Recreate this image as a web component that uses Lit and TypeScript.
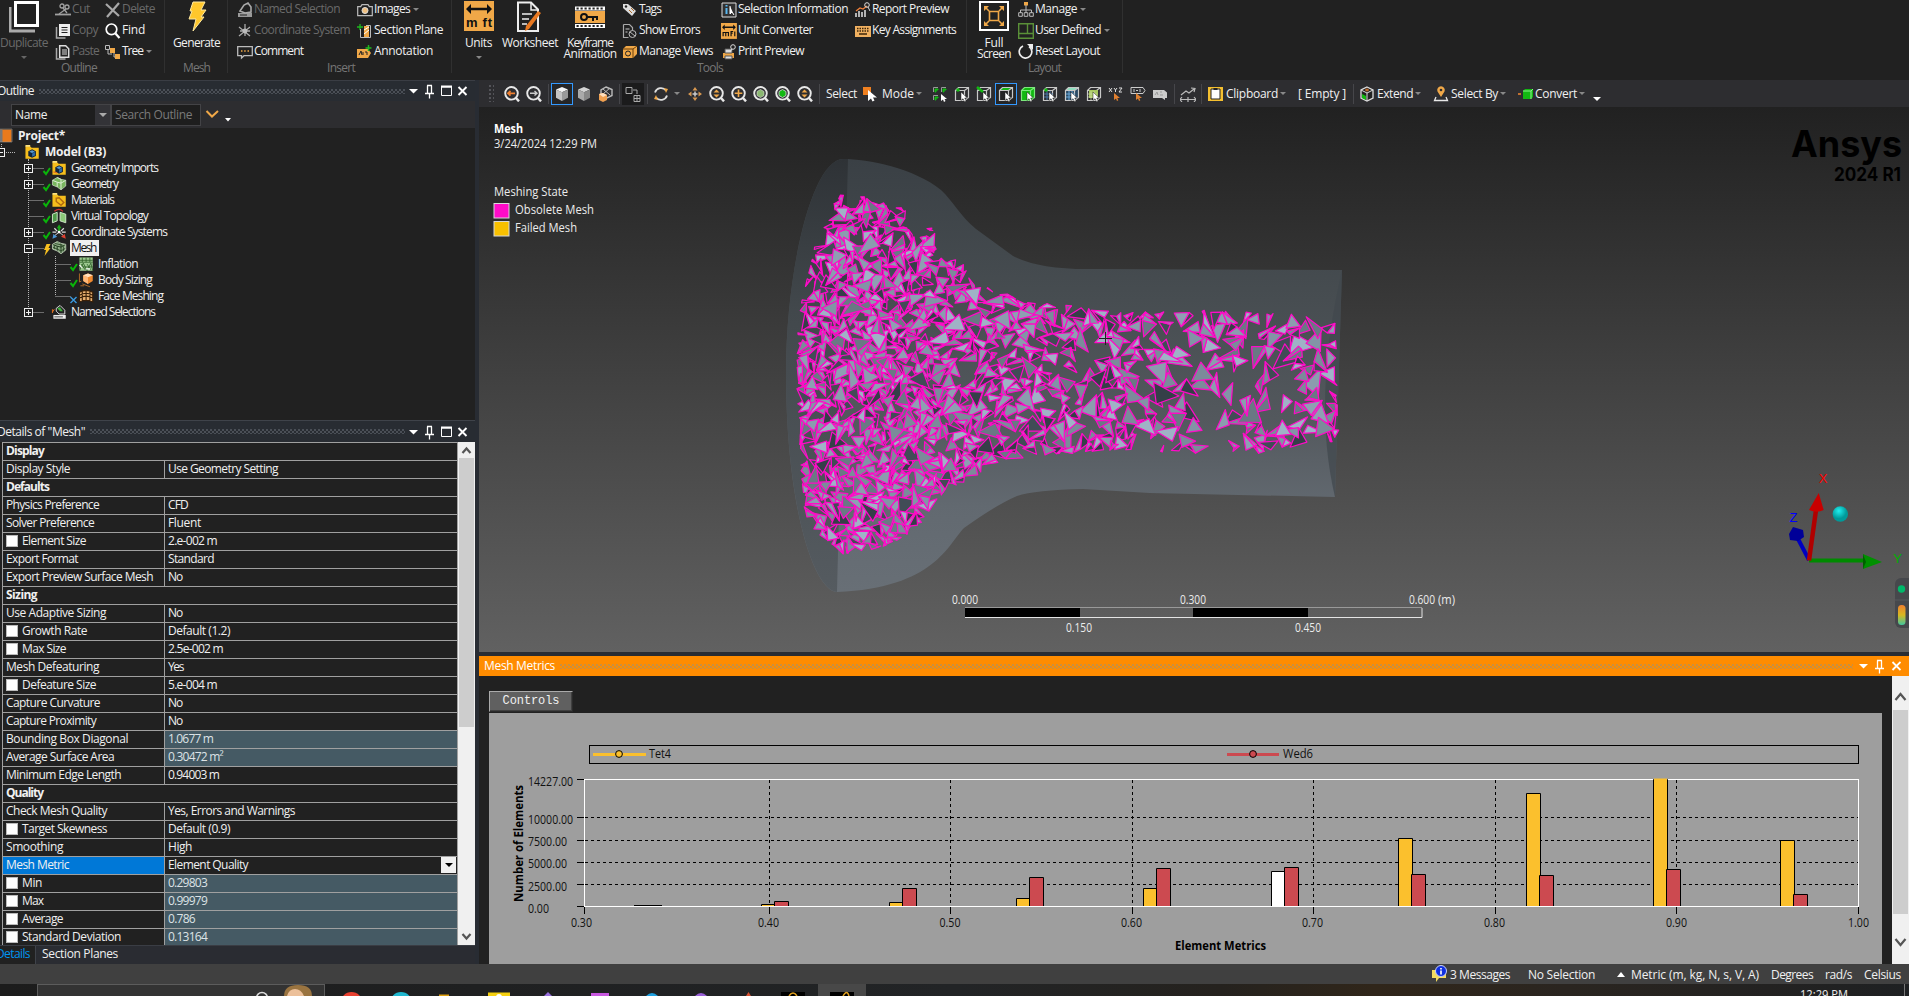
import { LitElement, html, svg, css, nothing } from "lit";
import { customElement } from "lit/decorators.js";

const FAMILY = '"Open Sans", "Noto Sans", sans-serif';
const ctx = document.createElement("canvas").getContext("2d")!;

/** Text span tracked so that it takes up exactly `w` pixels. */
function fit(text: string, w: number, bold = false, cls = "") {
  ctx.font = `${bold ? 700 : 400} 12px ${FAMILY}`;
  const natural = ctx.measureText(text).width;
  const ls = (w - natural) / text.length;
  return html`<span class="t ${bold ? "b" : ""} ${cls}" style="letter-spacing:${ls.toFixed(3)}px">${text}</span>`;
}

/** SVG label with a fixed run length. */
function label(text: string, x: number, y: number, w: number, cls = "vt") {
  return svg`<text class=${cls} x=${x} y=${y} textLength=${w} lengthAdjust="spacingAndGlyphs">${text}</text>`;
}

function rng(seed: number) {
  let s = seed;
  return () => {
    s = (s * 1664525 + 1013904223) % 4294967296;
    return s / 4294967296;
  };
}

const W = "#e8e8e8";
const O = "#f0a848";
const G = "#12b812";

const ic = (body: unknown, w = 16, h = 16, vb = `0 0 ${w} ${h}`) =>
  html`<svg class="ic" width=${w} height=${h} viewBox=${vb}>${body}</svg>`;

const cubeWire = (col = "#c8c8c8") => svg`<path d="M1.5 4.5h9v10h-9zM1.5 4.5l3-3h10v10l-4 3M10.500 4.500l4-3" fill="none" stroke=${col} stroke-width="1.200"/>`;
const cursor = svg`<path d="M7 6v8.500l2-1.800 1.500 3 1.600-.8-1.400-2.900h2.600z" fill="#fff" stroke="#222" stroke-width=".5"/>`;
const lens = (inner: unknown) => svg`<circle cx="7.500" cy="7.300" r="6.300" fill="none" stroke="#e8e8e8" stroke-width="1.900"/><path d="M12 12l3 3.400" stroke="#e8e8e8" stroke-width="2.400"/>${inner}`;
const solidCube = (a: string, b: string, c: string) => svg`<path d="M8 1l6 2.500-6 2.800-6-2.800z" fill=${a}/><path d="M2 3.500l6 2.800V15l-6-3.200z" fill=${b}/><path d="M14 3.500L8 6.300V15l6-3.200z" fill=${c}/>`;
const unitsArrow = svg`<path d="M0 0h30v30H0z" fill="#f0a848"/><path d="M2 8l5-5v3.800h16V3l5 5-5 5V9.200H7V13z" fill="#111"/>`;

const I: Record<string, unknown> = {
  cut: svg`<g stroke="#a0a0a0" fill="none" stroke-width="1.300"><circle cx="7" cy="4" r="2"/><circle cx="12" cy="5" r="2"/><path d="M8 6l4 5M11 7L4 12"/><path d="M0 12.500h16" stroke-width="1.800"/></g>`,
  copy: svg`<path d="M1.500 4v11h9" fill="none" stroke="#aaa" stroke-width="1.500"/><path d="M4 1h11v12H4z" fill="#eee"/><path d="M6.500 4.500h6M6.500 7h6M6.500 9.500h6" stroke="#222"/>`,
  paste: svg`<path d="M1.500 4v11h9" fill="none" stroke="#aaa" stroke-width="1.500"/><path d="M4.700 1.700h6l3 3v8.600h-9z" fill="none" stroke="#ddd" stroke-width="1.500"/><path d="M7 6h5M7 8h5M7 10h5" stroke="#ddd"/>`,
  del: svg`<path d="M1 2l13 12M14 1L2 15" stroke="#a8a8a8" stroke-width="2.200"/>`,
  find: svg`<circle cx="6.500" cy="6.300" r="5.300" fill="none" stroke="#fff" stroke-width="1.700"/><path d="M10.500 10.500l4 4.500" stroke="#fff" stroke-width="2.200"/>`,
  tree: svg`<path d="M.5 1.500h4v4h-4z" fill="none" stroke="#bbb"/><path d="M3 6v4h4M9 8v5h3" stroke="#bbb" fill="none"/><path d="M5 4h5v5H5zM10 10h5v5h-5z" fill="#f0a848"/>`,
  named: svg`<path d="M1 11h14v4H1z" fill="#999"/><path d="M3 9l4-6 4-2 3 4v5l-6 1z" fill="none" stroke="#aaa" stroke-width="1.600"/><path d="M3 13h7" stroke="#222"/>`,
  coord: svg`<path d="M8 1v12M2 4l11 9M13 4L2 13M3 8h10" stroke="#aaa" stroke-width="1.300"/><circle cx="8" cy="8" r="2.400" fill="#bbb"/>`,
  comment: svg`<path d="M.7 2.700h14.600v9H7L4.500 14v-2.300H.7z" fill="none" stroke="#bbb" stroke-width="1.300"/><path d="M4 7h1.500M7.200 7h1.500M10.500 7H12" stroke="#f0a848" stroke-width="1.500"/>`,
  images: svg`<path d="M.7 4.700h3L5 2.700h6l1.300 2h3v9H.7z" fill="none" stroke="#bbb" stroke-width="1.200"/><circle cx="8" cy="8.500" r="3" fill="#f0c080" stroke="#ddd"/>`,
  plane: svg`<path d="M0 4h6M3 1v6" stroke="#1eb81e" stroke-width="1.300"/><path d="M3.500 6v8.500h10V2.500H9" fill="none" stroke="#bbb"/><path d="M7 3h5v11H7z" fill="#f0a848"/><path d="M7 7l5-3M7 11l5-4" stroke="#fff"/>`,
  annot: svg`<path d="M0 5h11l3 4-3 5H0z" fill="#f0a848"/><path d="M2 11l2-4 1 4M6 11V8M8 8h2v3" stroke="#222" fill="none"/><path d="M8.500 4h6M11.500 1v6" stroke="#1eb81e" stroke-width="1.500"/>`,
  tags: svg`<path d="M1 2h5l8 7-4 5-9-8z" fill="#ddd"/><circle cx="4" cy="4.500" r="1.200" fill="#222"/><path d="M7 8l3 3M9 6l3 3" stroke="#a86828"/>`,
  errors: svg`<path d="M1.500 1.500h6l3 3v3M1.500 1.500v13h5" fill="none" stroke="#aaa" stroke-width="1.200"/><path d="M3.500 6h4M3.500 9h2" stroke="#ccc"/><circle cx="10.500" cy="11" r="3.500" fill="none" stroke="#bbb"/><path d="M8 9l5 4" stroke="#bbb"/>`,
  views: svg`<path d="M1 5l3-3h11v8l-4 4H1z" fill="#f0a848"/><path d="M1 5h10v9M11 5l4-3" stroke="#6b3f08" fill="none"/><circle cx="6" cy="9.500" r="2.500" fill="none" stroke="#222"/>`,
  selinfo: svg`<path d="M1 1h14v14H1z" fill="#303030" stroke="#ddd"/><path d="M5.500 3v1.500M5.500 6v6" stroke="#5ab8f0" stroke-width="2"/><path d="M9 4v8l2-2 2 3" stroke="#fff" fill="#fff"/>`,
  conv: svg`<g transform="scale(.53)">${unitsArrow}<path d="M4 25v-7h5v7M9 18h5v7M19 25V16h4M18 19h4M26 16v9" stroke="#111" stroke-width="2.200" fill="none"/></g>`,
  print: svg`<path d="M2 9h11v5H2z" fill="#f0a848"/><path d="M4 5h7v4H4zM4 12h7v3H4z" fill="#ddd" stroke="#555"/><circle cx="12" cy="3" r="2.300" fill="none" stroke="#ddd"/><path d="M11 5L9 8" stroke="#ddd"/>`,
  report: svg`<path d="M1 15v-4M4 15V9M7 15v-5M10 15V8" stroke="#ccc" stroke-width="1.700"/><path d="M1 9l4-3 3 1 4-3" stroke="#f0803a" fill="none" stroke-width="1.300"/><circle cx="12" cy="3" r="2.300" fill="none" stroke="#ddd"/><path d="M13 5l2 4" stroke="#ddd"/>`,
  keys: svg`<path d="M0 3h16v11H0z" fill="#f0b060"/><path d="M2 5.500h12M2 8h12" stroke="#3b2508" stroke-width="1.500" stroke-dasharray="1.500 1"/><path d="M4 11h8" stroke="#3b2508" stroke-width="1.500"/>`,
  manage: svg`<path d="M6 0h4v3.500H6z" fill="#f0a848"/><path d="M8 3v4M2.500 11V8h11v3M8 7v4" stroke="#bbb" fill="none"/><path d="M.7 10.700h3.600v3.600H.7zM6.200 10.700h3.600v3.600H6.200zM11.700 10.700h3.600v3.600h-3.600z" stroke="#bbb" fill="none"/>`,
  user: svg`<path d="M.7.7h14.600v14.600H.7zM9.500 1v9.500M1 10.500h14" fill="none" stroke="#5a9038" stroke-width="1.400"/>`,
  reset: svg`<path d="M11 2.500A6.300 6.300 0 1 1 5 2" fill="none" stroke="#eee" stroke-width="1.700"/><path d="M9 0h6v6z" fill="#eee"/>`,
};

const arrowDn = html`<i class="dn"></i>`;
const rbtn = (icon: string, text: string, w: number, dis = false, drop = false) => html`
  <div class="rb ${dis ? "dis" : ""}">${ic(I[icon])}${fit(text, w)}${drop ? arrowDn : nothing}</div>`;

const tool = (body: unknown, cls = "") => html`<div class="tb ${cls}">${ic(body)}</div>`;

/* ---------- outline tree ---------- */
const folder = (inner: unknown) => svg`<path d="M1 2h5l1.500 1.500H15V15H1z" fill="#f5bd1c"/><path d="M1 1.500h5" stroke="#ffe27a" stroke-width="2"/>${inner}`;
const miniCube = svg`<path d="M8 5l4 2v5l-4 2-4-2V7z" fill="#10243c"/><path d="M8 6l3 1.500-3 1.500-3-1.500z" fill="#5a9ad0"/><path d="M8 9.500V13l3-1.500V8z" fill="#2f6ca8"/>`;
const geo = (mesh = false) => svg`<path d="M1 4l5-3 4 2 5 1v6l-5 4-4-3-5-2z" fill=${mesh ? "#8fae86" : "#79b65e"}/><path d="M1 4l5 2 4 1 5-3M6 6v5M10 7v7M6 1l4 2v4" stroke=${mesh ? "#1f3a1c" : "#e0f0d8"} fill="none"/>${mesh ? svg`<path d="M1 7l5 2 4 2 5-3M3 5v4M12.500 6v6M3 3l9 2" stroke="#1f3a1c" stroke-width=".8" fill="none"/>` : nothing}<path d="M1 4l5-3 4 2 5 1v6l-5 4-4-3-5-2z" fill="none" stroke="#c8d8c0" stroke-width=".8"/>`;
const treeIcons: Record<string, unknown> = {
  model: folder(miniCube),
  gi: folder(svg`${miniCube}<path d="M2 12l4 1" stroke="#e07020" stroke-width="1.500"/>`),
  geo: geo(),
  mat: folder(svg`<path d="M5 6l3-.5 5 5-3 3-5-4z" fill="none" stroke="#b06a10" stroke-width="1.500"/>`),
  vt: svg`<path d="M1 6l5-2v9l-5 2z" fill="#4f9a4a" stroke="#cfe8c8"/><path d="M9 4l6 2v9l-6-2z" fill="#8cc878" stroke="#cfe8c8"/><path d="M3 3q5-4 9 0" stroke="#d03030" fill="none" stroke-width="1.300"/>`,
  cs: svg`<path d="M8 8V2" stroke="#18a818" stroke-width="2"/><path d="M5.500 4L8 0l2.500 4z" fill="#18a818"/><path d="M8 8l5 4M8 8l-5 4" stroke="#ddd"/><path d="M3 4l3 3M13 4l-3 3M1 8h4M11 8h4" stroke="#ddd" stroke-width="1.300"/><path d="M15 15l-1-5-4 3z" fill="#e04030"/><path d="M1 15l1-5 4 3z" fill="#4a98d8"/><circle cx="8" cy="8" r="1.500" fill="#fff"/>`,
  mesh: geo(true),
  infl: svg`<path d="M1 1h14v14H1z" fill="#9cc890"/><path d="M1 4h14M1 6h14M4 1v5M8 1v5M12 1v5M1 15l4-8 4 8 4-8 2 8M1 11h14M3 8l4 6M9 8l4 6" stroke="#2f6028" fill="none" stroke-width=".9"/><path d="M1 9l3 3M8 13h4" stroke="#fff" stroke-width="1.200"/>`,
  body: svg`<path d="M5 3l5-2 5 2v6l-5 3-5-3z" fill="#f08a30"/><path d="M5 3l5 2v7l-5-3z" fill="#ffb878"/><path d="M5 3l5-2 5 2-5 2z" fill="#ffe0c0"/><path d="M1 1v9l2-1M4 12l8 3M2 14h4" stroke="#b06a28" fill="none"/>`,
  face: svg`<path d="M1 4q7-4 14 0v10q-7-3-14 0z" fill="#e8b070"/><path d="M1 7q7-4 14 0M1 10q7-4 14 0M4 2.500v11M8 1.500V12M12 2.500v11M1 4q7-4 14 0v10q-7-3-14 0z" stroke="#3a2008" fill="none" stroke-width="1.200"/>`,
  ns: svg`<path d="M2 11h13v4H2z" fill="#eee"/><path d="M3 13h9" stroke="#444"/><path d="M5 4l4-3 5 5v4H8L5 7z" fill="#222" stroke="#ddd"/><path d="M6 4l3-1 3 4H9z" fill="#3fae3f"/><path d="M1 8l2-3M1 5v4" stroke="#e07020"/>`,
};
interface Node { t: string; w: number; i: string; lvl: number; box?: string; mark?: string; last?: boolean; sel?: boolean }
const nodes: Node[] = [
  { t: "Geometry Imports", w: 87, i: "gi", lvl: 1, box: "+", mark: "c" },
  { t: "Geometry", w: 47, i: "geo", lvl: 1, box: "+", mark: "c" },
  { t: "Materials", w: 43, i: "mat", lvl: 1, mark: "c" },
  { t: "Virtual Topology", w: 77, i: "vt", lvl: 1, mark: "c" },
  { t: "Coordinate Systems", w: 96, i: "cs", lvl: 1, box: "+", mark: "c" },
  { t: "Mesh", w: 25, i: "mesh", lvl: 1, box: "-", mark: "b", sel: true },
  { t: "Inflation", w: 40, i: "infl", lvl: 2, mark: "c" },
  { t: "Body Sizing", w: 54, i: "body", lvl: 2, mark: "c" },
  { t: "Face Meshing", w: 65, i: "face", lvl: 2, mark: "x", last: true },
  { t: "Named Selections", w: 84, i: "ns", lvl: 1, box: "+", last: true },
];
const dots = (d: string) => svg`<path d=${d} stroke="#b8b8b8" stroke-dasharray="1 1" fill="none"/>`;
const box = (x: number, k: string) => svg`<rect x=${x} y="4.500" width="8" height="8" fill="#212121" stroke="#f0f0f0"/><path d="M${x + 1.5} 8.500h5${k === "+" ? `M${x + 4} 6v5` : ""}" stroke="#f0f0f0"/>`;
const mark = (x: number, k?: string) =>
  k === "c" ? svg`<path d="M${x} 11l2.500 3 4-6" fill="none" stroke="#0ab40a" stroke-width="2"/>`
  : k === "b" ? svg`<path d="M${x + 3} 4h4l-2 4h2l-6 8 1.500-6h-2z" fill="#f8c020"/>`
  : k === "x" ? svg`<path d="M${x} 9l6 6M${x + 6} 9l-6 6" stroke="#3a9ae0" stroke-width="1.400"/>` : nothing;

function treeRow(n: Node) {
  const w = n.lvl === 1 ? 70 : 97;
  const x = n.lvl === 1 ? 28.5 : 55.5;
  return html`<div class="tr"><svg width=${w} height="16">
    ${n.lvl === 2 ? dots("M28.500 0v16") : nothing}
    ${dots(`M${x} 0v${n.last ? 8 : 16}`)}${dots(`M${x} 8.5h15`)}
    ${n.box ? box(24.5, n.box) : nothing}
    ${mark(n.lvl === 1 ? 43.5 : 70.5, n.mark)}
    <g transform="translate(${n.lvl === 1 ? 51.5 : 78.5} .5) scale(.95)">${treeIcons[n.i]}</g>
  </svg>${fit(n.t, n.w, false, n.sel ? "sel" : "lab")}</div>`;
}

/* ---------- details ---------- */
type Row = [string, number, string?, number?, string?];
const rows: Row[] = [
  ["Display", 38], ["Display Style", 64, "Use Geometry Setting", 110],
  ["Defaults", 43], ["Physics Preference", 93, "CFD", 20], ["Solver Preference", 88, "Fluent", 33],
  ["Element Size", 64, "2.e-002 m", 49, "k"], ["Export Format", 72, "Standard", 46],
  ["Export Preview Surface Mesh", 147, "No", 14],
  ["Sizing", 31], ["Use Adaptive Sizing", 100, "No", 14], ["Growth Rate", 65, "Default (1.2)", 62, "k"],
  ["Max Size", 44, "2.5e-002 m", 55, "k"], ["Mesh Defeaturing", 93, "Yes", 15],
  ["Defeature Size", 74, "5.e-004 m", 49, "k"], ["Capture Curvature", 94, "No", 14],
  ["Capture Proximity", 90, "No", 14], ["Bounding Box Diagonal", 122, "1.0677 m", 45, "r"],
  ["Average Surface Area", 108, "0.30472 m²", 55, "r"], ["Minimum Edge Length", 115, "0.94003 m", 51],
  ["Quality", 37], ["Check Mesh Quality", 101, "Yes, Errors and Warnings", 127],
  ["Target Skewness", 85, "Default (0.9)", 62, "k"], ["Smoothing", 57, "High", 24],
  ["Mesh Metric", 63, "Element Quality", 80, "s"], ["Min", 20, "0.29803", 39, "kr"],
  ["Max", 21, "0.99979", 39, "kr"], ["Average", 41, "0.786", 27, "kr"], ["Standard Deviation", 99, "0.13164", 39, "kr"],
];
function detailRow([l, lw, v, vw, f = ""]: Row) {
  if (!v) return html`<div class="dr">${fit(l, lw, true, "dl")}</div>`;
  return html`<div class="dr">
    <div class="dk ${f === "s" ? "hot" : ""}">${f.includes("k") ? html`<i class="cb"></i>` : nothing}${fit(l, lw)}</div>
    <div class="dv ${f.includes("r") ? "ro" : ""}">${fit(v, vw!)}${f === "s" ? html`<b class="combo"><i></i></b>` : nothing}</div>
  </div>`;
}

/* ---------- mesh ---------- */
const region: [number, number][] = [
  [839, 195], [869, 197], [906, 209], [903, 228], [918, 238], [930, 224], [936, 236], [934, 258], [952, 258], [971, 270], [974, 286], [995, 290], [1035, 303],
  [1076, 306], [1131, 312], [1224, 311], [1336, 316], [1338, 440], [1261, 452], [1187, 452], [1113, 450], [1069, 453], [1002, 460],
  [976, 477], [946, 490], [917, 530], [880, 548], [843, 554], [815, 532], [804, 510], [799, 440], [796, 373], [800, 307], [817, 240],
];
function inside(x: number, y: number) {
  let c = false;
  for (let i = 0, j = region.length - 1; i < region.length; j = i++) {
    const [xi, yi] = region[i], [xj, yj] = region[j];
    if (yi > y !== yj > y && x < ((xj - xi) * (y - yi)) / (yj - yi) + xi) c = !c;
  }
  return c;
}
function buildMesh() {
  const r = rng(90125);
  const fills = ["#8e9fb2", "#9fb2c6", "#7b8b9a", "#8b9cae", "#8294a6", "#414c56", "#353f48", "#6a7884"];
  const out: unknown[] = [];
  const placed: [number, number][] = [];
  let tries = 0;
  while (tries++ < 9000) {
    const x = 797 + r() * 542, y = 196 + r() * 358;
    const gap = x < 940 ? 6.8 : x < 1050 ? 7.8 : x < 1150 ? 8.8 : 9.8;
    if (!inside(x, y)) continue;
    if (placed.some(([a, b]) => Math.hypot(a - x, b - y) < gap)) continue;
    placed.push([x, y]);
    if (r() < (x > 1130 ? 0.32 : x > 1050 ? 0.18 : x > 940 ? 0.1 : 0.04)) continue;
    const size = (x > 1130 ? 8 : 7) + r() * 5.5;
    const a0 = r() * 6.283;
    const p = [0, 1, 2].map((k) => {
      const a = a0 + k * 2.09 + (r() - 0.5) * 1.3;
      const s = size * (0.65 + r() * 0.6);
      let px = x + Math.cos(a) * s, py = y + Math.sin(a) * s;
      for (let n = 0; n < 6 && !inside(px, py); n++) { px += (x - px) * 0.3; py += (y - py) * 0.3; }
      return [px, py];
    });
    const s = (z: number[]) => z[0].toFixed(1) + " " + z[1].toFixed(1);
    const base = Math.floor(r() * fills.length);
    if (r() < 0.4) {
      out.push(svg`<path d="M${s(p[0])}L${s(p[1])}L${s(p[2])}Z" fill=${fills[base]}/>`);
    } else {
      const t = 0.25 + r() * 0.5;
      const q = [p[0][0] + (p[2][0] - p[0][0]) * t + (r() - 0.5) * 5, p[0][1] + (p[2][1] - p[0][1]) * t + (r() - 0.5) * 5];
      out.push(svg`<path d="M${s(p[0])}L${s(p[1])}L${s(q)}Z" fill=${fills[base]}/><path d="M${s(p[1])}L${s(p[2])}L${s(q)}Z" fill=${fills[(base + 3) % 8]}/>`);
    }
  }
  return out;
}

const hull = "M843 159C868 159 914 168 941 190C953 201 960 216 976 229L1013 256Q1040 270 1094 269L1342 270L1335 497L1150 493L1083 489Q1035 490 1017 496Q996 505 964 528C948 544 935 588 837 592C812 590 786 500 786 373C786 270 812 160 843 159Z";

const bars: [number, number, number, string][] = [
  [761.5, 13, 904.5, "y"], [774.5, 14, 901.5, "r"], [889.5, 13, 902.5, "y"], [902.5, 14, 888.5, "r"],
  [1016.5, 13, 898.5, "y"], [1029.5, 14, 877.5, "r"], [1143.5, 13, 888.5, "y"], [1156.5, 14, 868.5, "r"],
  [1271.5, 13, 871.5, "w"], [1284.5, 14, 867.5, "r"], [1398.5, 14, 838.5, "y"], [1411.5, 14, 874.5, "r"],
  [1526.5, 14, 793.5, "y"], [1539.5, 14, 875.5, "r"], [1653.5, 14, 779.5, "y"], [1666.5, 14, 869.5, "r"],
  [1780.5, 14, 840.5, "y"], [1793.5, 14, 894.5, "r"],
];
const barFill: Record<string, string> = { y: "#fbc02d", r: "#cc4a50", w: "#ffffff" };

const winBtns = html`<span class="wb"><svg width="64" height="16">
  <path d="M4 6h9l-4.500 4.500z" fill="#fff"/><path d="M22.500 2.500v8M26.500 2.500v8M22 2.500h5M20 10.500h9M24.500 10.500v5" stroke="#fff" fill="none" stroke-width="1.300"/>
  <path d="M36.500 4h10v8.500h-10z" stroke="#fff" fill="none"/><path d="M36 3.500h11" stroke="#fff" stroke-width="2"/>
  <path d="M53.500 4l8 8M61.500 4l-8 8" stroke="#fff" stroke-width="1.900"/></svg></span>`;

@customElement("app-root")
export class AppRoot extends LitElement {
  static styles = css`
    :host { display: flex; flex-direction: column; width: 1909px; height: 996px; overflow: hidden; background: #212121; color: #f0f0f0;
      font: 12px "Open Sans", "Noto Sans", sans-serif; line-height: 16px; }
    * { box-sizing: border-box; }
    svg { display: block; flex: none; }
    .t { white-space: pre; flex: none; }
    .b { font-weight: 700; }
    .dn { width: 0; height: 0; border: 3px solid transparent; border-top-color: #888; border-bottom: 0; margin-left: 2px; flex: none; }
    .ribbon { display: flex; height: 80px; flex: none; background: #212121; }
    .grp { display: grid; grid-template-rows: 60px 18px; border-right: 1px solid #303030; height: 73px; flex: none; }
    .grp > .cols { display: flex; height: 60px; margin-top: -1px; }
    .gl { text-align: center; color: #767676; line-height: 15px; }
    .col { display: flex; flex-direction: column; flex: none; }
    .rb { display: flex; align-items: center; height: 21px; gap: 1px; flex: none; }
    .rb .t { margin-top: -2px; }
    .dis { color: #6a6a6a; }
    .dis .dn { border-top-color: #666; }
    .big { display: flex; flex-direction: column; align-items: center; flex: none; padding-top: 2px; }
    .big .t { line-height: 11px; }
    .big .t:first-of-type { margin-top: 4px; }
    .big .dn { margin: 8px 0 0; }
    .g1 { width: 165px; } .g1 .big { width: 54px; margin-left: -3px; } .g1 .ca { margin-left: 4px; width: 50px; }
    .g1 .gl { margin-left: -6px; }
    .g2 { width: 63px; } .g2 .big { width: 63px; }
    .g3 { width: 224px; padding-left: 9px; } .g3 .ca { width: 120px; } .g3 .gl { margin-left: -6px; }
    .g4 { width: 515px; } .g4 .u { width: 43px; margin-left: 5px; } .g4 .w { width: 60px; } .g4 .k { width: 58px; margin-left: 1px; }
    .g4 .ca { margin-left: 3px; width: 99px; } .g4 .cb2 { width: 134px; } .g4 .gl { margin-left: 2px; }
    .g5 { width: 156px; } .g5 .big { width: 54px; } .g5 .ca { margin-left: -3px; }
    .main { display: flex; height: 884px; flex: none; background: #2a2c32; }
    .left { width: 475px; display: flex; flex-direction: column; flex: none; border-top: 1px solid #3a3d44; }
    .ph { display: flex; align-items: center; height: 20px; flex: none; background: #282c32; margin-left: -3px; padding-right: 6px; }
    .ph.d { border-top: 1px solid #3f434a; height: 22px; }
    .grip { flex: 1; height: 5px; margin: 0 0 0 5px; background-image: radial-gradient(circle at 1px 1px, #4b5058 0.7px, transparent 1px), radial-gradient(circle at 3px 3px, #4b5058 0.7px, transparent 1px); background-size: 4px 4px; }
    .srch { display: flex; align-items: center; height: 27px; background: #2d2d30; flex: none; }
    .nm { display: flex; align-items: center; width: 100px; height: 22px; border: 1px solid #434346; background: #1e1e1e; padding-left: 3px; margin-left: 11px; justify-content: space-between; }
    .nm b { width: 15px; height: 20px; background: #333337; display: flex; align-items: center; justify-content: center; }
    .nm b i { margin: 0; border-width: 4px; border-bottom: 0; border-top-color: #aaa; }
    .se { width: 90px; height: 22px; border: 1px solid #434346; background: #1e1e1e; color: #7a7a7a; padding: 2px 0 0 3px; }
    .tree { height: 292px; background: #212121; flex: none; }
    .tr { display: flex; height: 16px; }
    .lab { padding-left: 1px; }
    .sel { background: #f0f0f0; color: #111; padding: 0 3px 0 1px; }
    .det { display: flex; height: 503px; flex: none; overflow: hidden; background: #212121; }
    .tbl { width: 456px; margin-left: 2px; border: 1px solid #a0a0a0; border-bottom: 0; flex: none; height: 520px; }
    .dr { display: flex; height: 18px; border-bottom: 1px solid #a0a0a0; line-height: 16px; }
    .dl { padding-left: 3px; }
    .dk { width: 162px; border-right: 1px solid #a0a0a0; padding-left: 3px; display: flex; flex: none; }
    .hot { background: #0078d7; }
    .dv { flex: 1; padding-left: 3px; display: flex; justify-content: space-between; }
    .ro { background: #455a64; color: #dde3e6; }
    .cb { width: 12px; height: 12px; background: #fff; border: 1px solid #bbb; margin: 2px 4px 0 0; }
    .combo { width: 15px; height: 16px; background: #f0f0f0; display: flex; align-items: center; justify-content: center; margin-right: 1px; }
    .combo i { border: 4px solid transparent; border-top-color: #000; border-bottom: 0; }
    .sb { width: 17px; background: #f0f0f0; display: flex; flex-direction: column; align-items: center; flex: none; }
    .sb b { width: 15px; background: #cdcdcd; display: block; flex: none; }
    .sb1 b { height: 269px; margin-bottom: 202px; }
    .sb1 svg { flex: none; }
    .sb2 svg { margin-top: 12px; } .sb2 b { height: 204px; margin-top: 4px; }
    .sb2 b + svg { margin-top: 24px; }
    .tabs { display: flex; height: 19px; background: #2a2c32; flex: none; align-items: center; border-top: 1px solid #3a3d44; }
    .tabs .on { color: #0095f0; background: #212121; height: 18px; width: 36px; border-right: 1px solid #3f434a; display: flex; justify-content: flex-end; padding-right: 5px; }
    .tabs > .t { margin-left: 6px; margin-top: -2px; }
    .gut { width: 4px; background: #282c33; flex: none; }
    .right { display: flex; flex-direction: column; width: 1430px; flex: none; }
    .bar { display: flex; align-items: center; height: 27px; background: #2d2d30; flex: none; padding-left: 22px; }
    .grab { width: 5px; height: 17px; margin: 0 0 0 -12px; background-image: radial-gradient(circle at 1px 1px, #55555a 0.7px, transparent 1px); background-size: 4px 4px; }
    .tb { width: 22px; height: 22px; display: flex; align-items: center; justify-content: center; flex: none; }
    .ring { box-shadow: inset 0 0 0 1px #3399ff; background: #252526; }
    .dark { background: #1b1b1c; }
    .sp { width: 1px; height: 20px; background: #46464a; flex: none; }
    .m2 { margin: 0 2px 0 3px; } .m3 { margin: 0 2px; }
    .p1 { width: 1px; } .p2 { width: 2px; } .p3 { width: 3px; } .p4 { width: 4px; } .p5 { width: 5px; } .p7 { width: 7px; } .p12 { width: 12px; }
    .view { width: 1430px; height: 545px; background: linear-gradient(#212121, #616161); flex: none; }
    .split { height: 4px; background: #282c33; flex: none; }
    .oh { display: flex; align-items: center; height: 20px; background: #ff8c00; color: #fff; padding: 0 8px 0 5px; flex: none; }
    .oh .grip { background-image: radial-gradient(circle at 1px 1px, #c89040 0.7px, transparent 1px), radial-gradient(circle at 3px 3px, #c89040 0.7px, transparent 1px); margin-right: 6px; }
    .mm { display: flex; height: 288px; background: #212121; flex: none; }
    .mc { width: 1393px; margin: 15px 10px 0; flex: none; }
    .ctl { width: 84px; height: 21px; background: #606060; border: 1px solid; border-color: #aaa #2a2a2a #2a2a2a #aaa; box-shadow: inset -1px -1px #404040; font: 12px/19px "Liberation Mono", monospace; text-align: center; letter-spacing: -0.1px; }
    .chart { background: #9e9e9e; margin-top: 1px; }
    .status { display: flex; align-items: center; height: 20px; background: #404040; flex: none; padding-top: 2px; }
    .status .first { margin: -2px 0 0 1431px; }
    .up { width: 0; height: 0; border: 4px solid transparent; border-bottom: 5px solid #fff; border-top: 0; margin-top: -2px; }
    .s18 { margin-left: 18px; } .s22 { margin-left: 22px; } .s6 { margin-left: 6px; } .s12 { margin-left: 12px; }
    .task { display: block; flex: none; }
    .vt { font: 12px "Open Sans", sans-serif; fill: #ececec; }
    .vb { font: 700 12px "Open Sans", sans-serif; fill: #fff; }
    .ct { font: 12px "Open Sans", sans-serif; fill: #111; }
    .cbt { font: 700 12px "Open Sans", sans-serif; fill: #000; }
    .logo { font: 700 37px Inter, "Open Sans", sans-serif; fill: #000; }
    .ver { font: 700 18.500px Inter, "Open Sans", sans-serif; fill: #000; }
    .ax { font: 13px "Liberation Sans", sans-serif; text-anchor: middle; }
    .mf { font: 700 13px "Liberation Sans", sans-serif; fill: #111; }
  `;

  ribbon() {
    return html`<div class="ribbon">
      <div class="grp g1"><div class="cols">
        <div class="big dis">${ic(svg`<path d="M1 6v24h25" fill="none" stroke="#aaa" stroke-width="3"/><rect x="6.500" y="1.500" width="22" height="23" fill="none" stroke="#fff" stroke-width="3"/>`, 30, 32)}${fit("Duplicate", 48)}${arrowDn}</div>
        <div class="col ca">${rbtn("cut", "Cut", 18, true)}${rbtn("copy", "Copy", 26, true)}${rbtn("paste", "Paste", 27, true)}</div>
        <div class="col">${rbtn("del", "Delete", 33, true)}${rbtn("find", "Find", 23)}${rbtn("tree", "Tree", 21, false, true)}</div>
      </div><div class="gl">${fit("Outline", 36)}</div></div>
      <div class="grp g2"><div class="cols"><div class="big">${ic(svg`<path d="M9 1h12l-4 8h5l-5 7h3L9 30l3-12H5l3-8H6z" fill="#ffc72c" stroke="#ffe9a0"/>`, 26, 32)}${fit("Generate", 47)}</div></div><div class="gl">${fit("Mesh", 27)}</div></div>
      <div class="grp g3"><div class="cols">
        <div class="col ca">${rbtn("named", "Named Selection", 86, true)}${rbtn("coord", "Coordinate System", 96, true)}${rbtn("comment", "Comment", 49)}</div>
        <div class="col">${rbtn("images", "Images", 36, false, true)}${rbtn("plane", "Section Plane", 69)}${rbtn("annot", "Annotation", 59)}</div>
      </div><div class="gl">${fit("Insert", 28)}</div></div>
      <div class="grp g4"><div class="cols">
        <div class="big u">${ic(svg`<g>${unitsArrow}</g><text class="mf" x="2" y="26" textLength="26">m ft</text>`, 30, 32)}${fit("Units", 27)}${arrowDn}</div>
        <div class="big w">${ic(svg`<path d="M2 1.500h13l7 7V30H2z" fill="none" stroke="#eee" stroke-width="2"/><path d="M15 2v7h7M6 13h10M6 18h7M6 23h5" stroke="#eee" fill="none" stroke-width="1.500"/><path d="M25 12l-12 16-4 2 1-5 12-15z" fill="#e87820"/>`, 28, 32)}${fit("Worksheet", 56)}</div>
        <div class="big k">${ic(svg`<path d="M0 10h30v12H0z" fill="#f0a848"/><path d="M0 5.500h30v4H0zM0 23h30v4H0z" fill="#fff"/><path d="M1.500 7.500h28M1.500 25h28" stroke="#212121" stroke-width="2.200" stroke-dasharray="2.200 1.800"/><circle cx="9" cy="16" r="3" fill="none" stroke="#111" stroke-width="2"/><path d="M12 16h11M18 16v4M22 16v3" stroke="#111" stroke-width="2"/>`, 30, 32)}${fit("Keyframe", 46)}${fit("Animation", 53)}</div>
        <div class="col ca">${rbtn("tags", "Tags", 22)}${rbtn("errors", "Show Errors", 61)}${rbtn("views", "Manage Views", 74)}</div>
        <div class="col cb2">${rbtn("selinfo", "Selection Information", 110)}${rbtn("conv", "Unit Converter", 75)}${rbtn("print", "Print Preview", 66)}</div>
        <div class="col">${rbtn("report", "Report Preview", 77)}${rbtn("keys", "Key Assignments", 84)}</div>
      </div><div class="gl">${fit("Tools", 26)}</div></div>
      <div class="grp g5"><div class="cols">
        <div class="big">${ic(svg`<rect x="1" y="1" width="28" height="28" fill="none" stroke="#fff" stroke-width="2"/><path d="M10.500 10.500h9v9h-9zM10 10L6 6M20 10l4-4M10 20l-4 4M20 20l4 4" fill="none" stroke="#f0a848" stroke-width="1.600"/><path d="M5 5h5l-5 5zM25 5h-5l5 5zM5 25h5l-5-5zM25 25h-5l5-5z" fill="#f0a848"/>`, 30, 32)}${fit("Full", 19)}${fit("Screen", 34)}</div>
        <div class="col ca">${rbtn("manage", "Manage", 42, false, true)}${rbtn("user", "User Defined", 66, false, true)}${rbtn("reset", "Reset Layout", 65)}</div>
      </div><div class="gl">${fit("Layout", 33)}</div></div>
    </div>`;
  }

  toolbar() {
    const z = (c: unknown) => tool(lens(c));
    const ud = svg`<path d="M4.500 6.500l3-3 3 3zM4.500 8.500l3 3 3-3z" fill="#f0a848"/>`;
    return html`<div class="bar"><div class="grab"></div><div class="p7"></div>
      ${z(svg`<path d="M4 7.300h7M6.500 5L4 7.300 6.500 9.600" stroke="#f08030" stroke-width="1.700" fill="none"/>`)}
      ${z(svg`<path d="M4 7.300h7M8.500 5l2.500 2.300-2.500 2.300" stroke="#ccc" stroke-width="1.400" fill="none"/>`)}
      <div class="sp m2"></div>
      ${tool(solidCube("#f4f4f4", "#c4c4c4", "#9a9a9a"), "ring")}
      ${tool(solidCube("#d4d4d4", "#aaaaaa", "#888"))}
      ${tool(svg`<path d="M8 1l6 2.500v6L9 12 3 8V4z" fill="none" stroke="#bbb" stroke-width="1.400"/><path d="M5 3l7 6M12 2L5 8" stroke="#bbb"/><path d="M1 8l4-1 4 2v5l-4 2-4-2z" fill="#f0a050"/><path d="M1 8l4-1 4 2-4 2z" fill="#ffe0c0"/>`)}
      <div class="sp m3"></div>
      ${tool(svg`<path d="M1 1.500h6v6H1zM8 4h4v4M9 9.500h6v6H9zM12 9.500v6M9 12.500h6" fill="none" stroke="#aaa"/>`, "dark")}
      <div class="sp m2"></div>
      ${tool(svg`<path d="M2 6.500a6.300 6.300 0 0 1 11-2M14 9.500a6.300 6.300 0 0 1-11 2" fill="none" stroke="#ddd" stroke-width="1.800"/><path d="M11 2l4 1-2 4zM5 14l-4-1 2-4z" fill="#f0a848"/>`)}
      <i class="dn"></i><div class="p4"></div>
      ${tool(svg`<path d="M8 5.500v5M5.500 8h5" stroke="#ccc" stroke-width="1.500"/><path d="M8 1l2.500 3.500h-5zM8 15l2.500-3.500h-5zM1 8l3.500-2.500v5zM15 8l-3.500-2.500v5z" fill="#d89850"/>`)}
      ${z(ud)}${z(svg`<path d="M7.500 3.500v7.600M3.700 7.300h7.600" stroke="#f0a848" stroke-width="1.600"/>`)}
      ${z(svg`<path d="M7.500 3.500l3.500 2v4l-3.500 2-3.500-2v-4z" fill="#8ab870" stroke="#ddd" stroke-width=".6"/>`)}
      ${z(svg`<path d="M7.500 3.500l3.500 2v4l-3.500 2-3.500-2v-4z" fill="#12b812" stroke="#ddd" stroke-width=".8"/>`)}${z(ud)}
      <div class="sp m2"></div><div class="p4"></div>${fit("Select", 31)}<div class="p3"></div>
      ${tool(svg`<path d="M0 1h8v8H0z" fill="#f08020"/><path d="M5 4v11l3-2.500 1.500 3 2-1-1.500-3h4z" fill="#fff"/>`)}${fit("Mode", 32)}${arrowDn}
      <div class="p7"></div>
      ${tool(svg`<path d="M1.500 6V1.500H6M9.500 6V1.500H14M1.500 14V9.500H6" stroke="#999" fill="none"/><path d="M3 3h3v1H4v2H3zM11 3h3v1h-2v2h-1zM3 11h3v1H4v2H3z" fill=${G} stroke=${G}/><path d="M9 8v7l2-1.500 1 2.500 1.500-1L12.500 13H15z" fill="#fff"/>`)}
      ${tool(svg`${cubeWire()}<circle cx="4" cy="4" r="1.800" fill=${G}/>${cursor}`)}
      ${tool(svg`${cubeWire()}<path d="M1 1l6 5" stroke=${G} stroke-width="2.500"/>${cursor}`)}
      ${tool(svg`<path d="M1.500 4.500l3-3h10l-4 3z" fill=${G}/>${cubeWire()}${cursor}`, "ring")}
      ${tool(svg`<path d="M1.500 4.500l3-3h10v10l-4 3h-9z" fill=${G}/>${cubeWire("#7ce87c")}${cursor}`)}
      ${tool(svg`${cubeWire()}<path d="M2 8h9M2 11h9M5 5v9M8 5v9" stroke="#4a78a8"/><circle cx="4" cy="4" r="1.800" fill=${G}/>${cursor}`)}
      ${tool(svg`<path d="M1.500 4.500l3-3h10v10l-4 3h-9z" fill="#2a4a66"/><path d="M1.500 4.500l3-3h10l-4 3z" fill="#8fe0c0"/>${cubeWire()}<path d="M2 8h9M2 11h9M5 5v9M8 5v9" stroke="#6aa8d8"/>${cursor}`)}
      ${tool(svg`${cubeWire()}<path d="M3 4h9v8H3z" fill="#a8c860"/><path d="M2 8h9M2 11h9M5 5v9M8 5v9" stroke="#cfe0a0" stroke-width=".7"/>${cursor}`)}
      ${tool(svg`<path d="M1 2l3 4M4 2L1 6M6 2l1.500 2L9 2M7.500 4v2M11 2h3l-3 4h3" stroke="#ddd" fill="none"/><path d="M6 7v7l2-1.500 1 2.500 1.300-.7L9.300 12H12z" fill="#e08030"/>`)}
      ${tool(svg`<path d="M1 1.500h12l2 3-2 3H1z" stroke="#ccc" fill="none"/><path d="M4 3v3M6 4.500h2M10 3v3" stroke="#ccc"/><path d="M6 7v7l2-1.500 1 2.500 1.300-.7L9.300 12H12z" fill="#e08030"/>`)}
      ${tool(svg`<path d="M1 4h11l3 2.500V12h-2v2l-3-2H1z" fill="#ccc"/><path d="M3 9l2-3 1 3M8 6h2M8 9h3" stroke="#999" fill="none"/>`)}
      <div class="sp m2"></div>
      ${tool(svg`<path d="M1 9l5-4 3 2 5-4M11 2l4 .5-1 3.500M0 13.500h16M2 11l-2 2.500L2 16M8 11v5M14 11l2 2.500-2 2.500" stroke="#bbb" fill="none" stroke-width="1.200"/>`)}
      <div class="sp m3"></div><div class="p4"></div>
      ${ic(svg`<path d="M0 1h15v14H0z" fill="#f5c030"/><path d="M3 3h9v10H3z" fill="#fff" stroke="#222"/><path d="M5.500 2h4v2h-4z" fill="#222"/>`)}<div class="p2"></div>${fit("Clipboard", 52)}${arrowDn}
      <div class="p12"></div>${fit("[ Empty ]", 48)}<div class="p7"></div><div class="sp"></div><div class="p5"></div>
      ${ic(svg`<path d="M8 1l6 3v8l-6 3-6-3V4z" fill="#222" stroke="#ddd" stroke-width="1.300"/><path d="M2 4l6 3 6-3M8 7v8" stroke="#ddd" fill="none"/><path d="M3 8l4 2v4l-4-2z" fill=${G}/><path d="M6 4h4M8 2.500v3" stroke="#f08030"/>`)}<div class="p2"></div>${fit("Extend", 36)}${arrowDn}
      <div class="p12"></div>
      ${ic(svg`<path d="M8 11L4.500 5.500a3.800 3.800 0 1 1 7 0z" fill=${O}/><circle cx="8" cy="4" r="1.300" fill="#2d2d30"/><path d="M3 11l-1.500 3.500h13L13 11" stroke=${W} fill="none" stroke-width="1.300"/>`)}<div class="p2"></div>${fit("Select By", 47)}${arrowDn}
      <div class="p12"></div>
      ${ic(svg`<path d="M0 8h3" stroke="#c07030" stroke-width="2"/><path d="M5 5l2-2h8v8l-2 2H5z" fill=${G}/><path d="M5 5h8v8M13 5l2-2" stroke="#8cf08c" fill="none"/>`)}<div class="p1"></div>${fit("Convert", 42)}${arrowDn}
      <svg width="24" height="16"><path d="M8 11h8l-4 4z" fill="#fff"/></svg>
    </div>`;
  }

  view() {
    return html`<svg class="view" viewBox="479 107 1430 545">
      <defs>
        <linearGradient id="h" x1="0" y1="0" x2="0" y2="1"><stop offset="0" stop-color="#3a4045"/><stop offset=".3" stop-color="#464c50"/><stop offset=".6" stop-color="#53585d"/><stop offset=".8" stop-color="#626970"/><stop offset="1" stop-color="#686f76"/></linearGradient>
        <linearGradient id="d" x1="0" y1="0" x2="0" y2="1"><stop offset="0" stop-color="#2e3236"/><stop offset=".35" stop-color="#42484c"/><stop offset="1" stop-color="#555b60"/></linearGradient>
        <radialGradient id="s" cx=".4" cy=".3"><stop offset="0" stop-color="#20f0f0"/><stop offset="1" stop-color="#009a9a"/></radialGradient>
        <linearGradient id="pill" x1="0" y1="0" x2="0" y2="1"><stop offset="0" stop-color="#f08030"/><stop offset=".5" stop-color="#d8b820"/><stop offset="1" stop-color="#40c8a0"/></linearGradient>
      </defs>
      <path d=${hull} fill="url(#h)"/>
      <path d="M848 159L837 592C812 590 786 500 786 373C786 270 812 160 843 159Z" fill="url(#d)"/>
      <path d="M1342 270Q1312 400 1335 497Z" fill="#42484d" opacity=".75"/>
      <g stroke="#ff0ac8" stroke-width="1.200" stroke-linejoin="round">${buildMesh()}</g>
      <path d="M1099 338.500h13M1105.500 332v13" stroke="#222"/>
      ${label("Mesh", 494, 133, 29, "vb")}${label("3/24/2024 12:29 PM", 494, 148, 103)}
      ${label("Meshing State", 494, 196, 74)}
      <rect x="494" y="203.500" width="15" height="14.500" fill="#ff0ac8" stroke="#d8d8d8"/>${label("Obsolete Mesh", 515, 214, 79)}
      <rect x="494" y="221.500" width="15" height="14.500" fill="#f8c000" stroke="#d8d8d8"/>${label("Failed Mesh", 515, 232, 62)}
      <text class="logo" x="1791" y="156.500" textLength="111" lengthAdjust="spacingAndGlyphs">Ansys</text>
      <text class="ver" x="1834" y="180.500" textLength="67" lengthAdjust="spacingAndGlyphs">2024 R1</text>
      <path d="M965 607.500h457" stroke="#999"/><path d="M965 617.500h457V608" fill="none" stroke="#e4e4e4"/>
      <path d="M965 608h115v9H965zM1193 608h115v9h-115z" fill="#000"/>
      ${label("0.000", 952, 604, 26)}${label("0.300", 1180, 604, 26)}${label("0.600", 1409, 604, 26)}${label("(m)", 1438, 604, 17)}
      ${label("0.150", 1066, 632, 26)}${label("0.450", 1295, 632, 26)}
      <path d="M1809 560L1796 535" stroke="#0000c0" stroke-width="4"/><path d="M1793 527l10 3 1 7-6 4-8-1-1-6z" fill="#000098"/>
      <path d="M1809 560.500h55" stroke="#008a00" stroke-width="4"/><path d="M1863 554l19 8-19 7z" fill="#009000"/><path d="M1863 554l3 8-3 7z" fill="#006000"/>
      <path d="M1809 560.500L1816 510" stroke="#b00000" stroke-width="4.500"/><path d="M1818.700 493l5 17q-7 3.500-14.700 0z" fill="#c80000"/>
      <circle cx="1840.300" cy="514" r="7.700" fill="url(#s)"/>
      <text class="ax" x="1823" y="483" fill="#f00">X</text><text class="ax" x="1793.500" y="522" fill="#0000ff">Z</text><text class="ax" x="1897.500" y="563" fill="#00b000">Y</text>
      <rect x="1895" y="578" width="22" height="50" rx="6" fill="#46484c"/><circle cx="1901.500" cy="589" r="3.700" fill="#00b86a"/><path d="M1895 600h14" stroke="#55585c"/><rect x="1898" y="605" width="7.500" height="20" rx="3.500" fill="url(#pill)"/>
    </svg>`;
  }

  chart() {
    const gx = [769.5, 950.5, 1132.5, 1313.5, 1495.5, 1676.5];
    const gy = [817.5, 840.5, 862.5, 884.5];
    const xl = ["0.30", "0.40", "0.50", "0.60", "0.70", "0.80", "0.90", "1.00"];
    const xc = [581.5, 768.5, 950, 1131.5, 1312.5, 1494.5, 1676.5, 1858.5];
    const yl: [string, number, number][] = [["14227.00", 785.5, 45], ["10000.00", 823.5, 45], ["7500.00", 845.5, 39], ["5000.00", 867.5, 39], ["2500.00", 890.5, 39], ["0.00", 912.5, 21]];
    return html`<svg class="chart" width="1393" height="251" viewBox="489 713 1393 251">
      <rect x="589.500" y="745.500" width="1269" height="18" fill="none" stroke="#000"/>
      <path d="M593 754.500h53" stroke="#fbc02d" stroke-width="3"/><circle cx="619" cy="754" r="3.400" fill="#fbc02d" stroke="#000"/>
      <path d="M1227 754.500h52" stroke="#cc4a50" stroke-width="3"/><circle cx="1253" cy="754" r="3.400" fill="#cc4a50" stroke="#000"/>
      ${label("Tet4", 649, 758, 22, "ct")}${label("Wed6", 1283, 758, 30, "ct")}
      ${gx.map((x) => svg`<path d="M${x} 780v126" stroke="#000" stroke-dasharray="3 3"/>`)}
      ${gy.map((y) => svg`<path d="M585 ${y}h1273" stroke="#000" stroke-dasharray="3 3"/>`)}
      ${[584.5, ...gx, 1858.5].map((x) => svg`<path d="M${x} 907v7" stroke="#000"/>`)}
      ${[779.5, ...gy, 906.5].map((y) => svg`<path d="M577 ${y}h7" stroke="#000"/>`)}
      <rect x="584.500" y="779.500" width="1274" height="127" fill="none" stroke="#fff"/>
      <path d="M634 905.500h28" stroke="#000"/>
      ${bars.map(([x, w, y, c]) => svg`<rect x=${x + 0.5} y=${y} width=${w - 1} height=${906 - y} fill=${barFill[c]}/><path d="M${x} 906V${y}h${w}V906" fill="none" stroke="#000"/>`)}
      <path d="M1654 779.500h13" stroke="#fbc02d" stroke-width="2"/><path d="M584 906.500h1275" stroke="#fff"/>
      ${yl.map(([t, y, w]) => label(t, 528, y, w, "ct"))}
      ${xl.map((t, i) => label(t, xc[i] - 10.5, 927, 21, "ct"))}
      ${label("Element Metrics", 1175, 950, 91, "cbt")}
      <text class="cbt" transform="translate(523 902) rotate(-90)" x="0" y="0" textLength="117" lengthAdjust="spacingAndGlyphs">Number of Elements</text>
    </svg>`;
  }

  render() {
    const chev = (up: boolean, s = 8) => html`<svg width="17" height="16"><path d=${up ? `M${8.5 - s / 2} 11l${s / 2}-4.500 ${s / 2} 4.500` : `M${8.5 - s / 2} 5l${s / 2} 4.500 ${s / 2}-4.500`} fill="none" stroke="#555" stroke-width="2.200"/></svg>`;
    return html`${this.ribbon()}
      <div class="main">
        <div class="left">
          <div class="ph">${fit("Outline", 37)}<div class="grip"></div>${winBtns}</div>
          <div class="srch"><div class="nm">${fit("Name", 32)}<b><i class="dn"></i></b></div><div class="se">${fit("Search Outline", 77)}</div>
            <svg width="40" height="22"><path d="M5.500 7l5.500 5.500 6-5.500" fill="none" stroke="#f0a848" stroke-width="2"/><path d="M24 14h6l-3 3.500z" fill="#fff"/></svg></div>
          <div class="tree">
            <div class="tr"><svg width="17" height="16"><path d="M0 1.500h11.500v12.500H0z" fill="#e87a1c"/><path d="M0 1.500h2.500V14H0z" fill="#777"/><path d="M0 1h12v13H0" fill="none" stroke="#999" stroke-width=".6"/></svg>${fit("Project*", 47, true, "lab")}</div>
            <div class="tr"><svg width="44" height="16">${dots("M1.500 0v4M6 8.500h10M28.500 13v3")}${box(-3.5, "-")}<g transform="translate(24.500 .5) scale(.95)">${treeIcons.model}</g></svg>${fit("Model (B3)", 61, true, "lab")}</div>
            ${nodes.map(treeRow)}
          </div>
          <div class="ph d">${fit('Details of "Mesh"', 88)}<div class="grip"></div>${winBtns}</div>
          <div class="det"><div class="tbl">${rows.map(detailRow)}</div><div class="sb sb1">${chev(true)}<b></b>${chev(false)}</div></div>
          <div class="tabs"><div class="on">${fit("Details", 34)}</div>${fit("Section Planes", 76)}</div>
        </div>
        <div class="gut"></div>
        <div class="right">
          ${this.toolbar()}${this.view()}
          <div class="split"></div>
          <div class="oh">${fit("Mesh Metrics", 71)}<div class="grip"></div>
            <svg width="42" height="16"><path d="M0 6h9l-4.500 4.500z" fill="#fff"/><path d="M18.500 2.500v8M22.500 2.500v8M18 2.500h5M16 10.500h9M20.500 10.500v5" stroke="#fff" fill="none" stroke-width="1.300"/><path d="M33.500 4l8 8M41.500 4l-8 8" stroke="#fff" stroke-width="1.800"/></svg></div>
          <div class="mm"><div class="mc"><div class="ctl">Controls</div>${this.chart()}</div><div class="sb sb2"><svg width="17" height="18"><path d="M3.500 12l5-6 5 6" fill="none" stroke="#555" stroke-width="2.200"/></svg><b></b><svg width="17" height="10"><path d="M3.500 1l5 6 5-6" fill="none" stroke="#555" stroke-width="2.200"/></svg></div></div>
        </div>
      </div>
      <div class="status">
        <svg class="first" width="19" height="18"><path d="M1 5h14v8H8l-3 4v-4H1z" fill="#f5dc60"/><circle cx="10" cy="6" r="5.500" fill="#1030e0" stroke="#c8d0ff"/><path d="M10 3v1.500M10 5.500v4" stroke="#fff" stroke-width="1.600"/></svg>
        ${fit("3 Messages", 60)}<span class="s18"></span>${fit("No Selection", 67)}<span class="s22"></span><i class="up"></i><span class="s6"></span>
        ${fit("Metric (m, kg, N, s, V, A)", 128)}<span class="s12"></span>${fit("Degrees", 42)}<span class="s12"></span>${fit("rad/s", 27)}<span class="s12"></span>${fit("Celsius", 37)}
      </div>
      <svg class="task" width="1909" height="12" viewBox="0 984 1909 12">
        <defs><linearGradient id="tk"><stop offset="0" stop-color="#1c1c1c"/><stop offset=".5" stop-color="#222426"/><stop offset=".64" stop-color="#25221e"/><stop offset=".72" stop-color="#30261a"/><stop offset=".82" stop-color="#2a2520"/><stop offset="1" stop-color="#1e2022"/></linearGradient></defs>
        <rect y="984" width="1909" height="12" fill="url(#tk)"/>
        <rect x="37.500" y="984.500" width="287" height="20" fill="#333" stroke="#5c5c5c"/>
        <circle cx="262" cy="998" r="5.500" fill="none" stroke="#ddd" stroke-width="1.500"/>
        <path d="M284 996q0-11 14-11t14 11z" fill="#9a7440"/><path d="M287 996q2-7 8-7t9 7z" fill="#ecc09a"/>
        <circle cx="351.500" cy="1003" r="11" fill="#e84030"/><circle cx="401" cy="1003" r="11" fill="#20b8d0"/><path d="M439 996v-1.500h10v1.500z" fill="#e0a010"/>
        <path d="M488 992.500h22v4h-22z" fill="#f5d010"/><circle cx="499" cy="997" r="3" fill="#fff"/><path d="M544 996l4-4 4 4z" fill="#9a70e0"/><path d="M591 993h18v3h-18z" fill="#c858e0"/>
        <path d="M646 996q6-6 12 0z" fill="#1ea0e0"/><path d="M695 996q6-6 12 0z" fill="#9a60d8"/><path d="M746 996l2.500-4 2.500 4z" fill="#d85030"/>
        <path d="M818 984h48v12h-48z" fill="#484848"/><path d="M781 992h24v4h-24zM830 992h24v4h-24z" fill="#000"/><path d="M789 996q4-6 8 0M843 996q4-7 6 0" fill="none" stroke="#e0a020" stroke-width="1.500"/>
        ${label("12:29 PM", 1800, 999, 48)}<path d="M1904.500 984v12" stroke="#777"/>
      </svg>`;
  }
}
